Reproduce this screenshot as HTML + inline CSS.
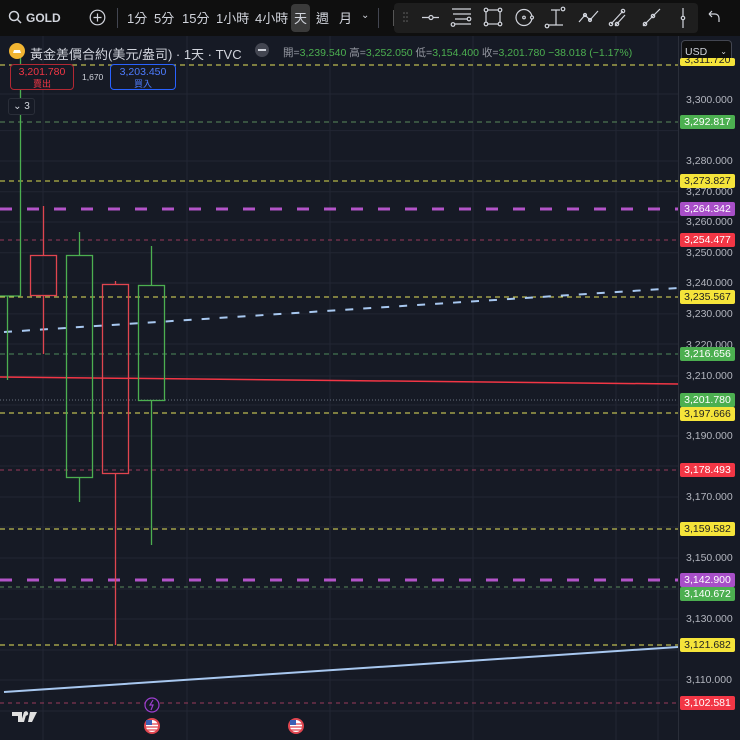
<!DOCTYPE html>
<html><head><meta charset="utf-8"><style>
body{margin:0;width:740px;height:740px;background:#161a25;overflow:hidden;font-family:"Liberation Sans","Noto Sans CJK TC",sans-serif;position:relative}
.tb{position:absolute;left:0;top:0;width:740px;height:36px;background:#0f0f0f}
.t{position:absolute;top:8px;color:#d1d4dc;font-size:13px}
.lg{position:absolute;top:44px;left:30px;color:#d1d4dc;font-size:13px}
.ohlc{position:absolute;top:45px;left:283px;font-size:10.5px;color:#9598a1;white-space:nowrap}
.ohlc b{font-weight:normal;color:#4caf50}
.tag{position:absolute;left:680px;width:55px;height:14px;font-size:10.5px;line-height:14px;text-align:center;border-radius:2px}
.ax{position:absolute;left:686px;font-size:10.5px;color:#b2b5be}
</style></head><body>
<div class="tb">
<svg style="position:absolute;left:8px;top:10px" width="14" height="14"><circle cx="6" cy="6" r="4.5" fill="none" stroke="#d1d4dc" stroke-width="1.5"/><line x1="9.5" y1="9.5" x2="13" y2="13" stroke="#d1d4dc" stroke-width="1.5"/></svg>
<div class="t" style="left:26px;font-weight:bold;font-size:12px;top:11px">GOLD</div>
<svg style="position:absolute;left:89px;top:9px" width="17" height="17"><circle cx="8.5" cy="8.5" r="7.3" fill="none" stroke="#d1d4dc" stroke-width="1.2"/><path d="M8.5 4.5v8M4.5 8.5h8" stroke="#d1d4dc" stroke-width="1.2"/></svg>
<div style="position:absolute;left:117px;top:8px;width:1px;height:20px;background:#434651"></div>
<div class="t" style="left:127px">1分</div><div class="t" style="left:154px">5分</div><div class="t" style="left:182px">15分</div><div class="t" style="left:216px">1小時</div><div class="t" style="left:255px">4小時</div>
<div style="position:absolute;left:291px;top:4px;width:19px;height:28px;background:#3a3a3a;border-radius:4px"></div>
<div class="t" style="left:294px">天</div><div class="t" style="left:316px">週</div><div class="t" style="left:339px">月</div>
<div class="t" style="left:361px;font-size:10px;top:10px">⌄</div>
<div style="position:absolute;left:378px;top:8px;width:1px;height:20px;background:#434651"></div>
<div style="position:absolute;left:394px;top:3px;width:304px;height:30px;background:#1e1e1e;border-radius:4px"></div>
<div style="position:absolute;left:393px;top:10px;width:1px;height:16px;background:#555"></div>
<svg style="position:absolute;left:395px;top:0" width="300" height="36" fill="none" stroke="#d1d4dc" stroke-width="1.2">
<g fill="#666" stroke="none"><circle cx="9" cy="13" r=".8"/><circle cx="12" cy="13" r=".8"/><circle cx="9" cy="17" r=".8"/><circle cx="12" cy="17" r=".8"/><circle cx="9" cy="21" r=".8"/><circle cx="12" cy="21" r=".8"/></g>
<path d="M27 17.5h7M38 17.5h6"/><circle cx="36" cy="17.5" r="2"/>
<path d="M57 9h19M58 14h18M60 19h12M60 24h16"/><circle cx="58" cy="24.5" r="1.8"/><circle cx="74" cy="19" r="1.8"/>
<rect x="91" y="10" width="14" height="14"/><circle cx="91" cy="10" r="1.8" fill="#1e1e1e"/><circle cx="105" cy="10" r="1.8" fill="#1e1e1e"/><circle cx="91" cy="24" r="1.8" fill="#1e1e1e"/><circle cx="105" cy="24" r="1.8" fill="#1e1e1e"/>
<circle cx="129" cy="17.5" r="8"/><circle cx="129" cy="17.5" r="1.3"/><circle cx="137" cy="17.5" r="1.5" fill="#1e1e1e"/>
<path d="M156 10h9M161 10v15M153 25h15"/><circle cx="168" cy="9" r="1.8"/><circle cx="152" cy="26" r="1.8"/>
<path d="M184 22l6-7 5 5 8-9"/><circle cx="190" cy="15" r="1.5"/><circle cx="195" cy="20" r="1.5"/>
<path d="M216 24l12-13M220 26l10-11"/><circle cx="216" cy="24" r="1.7"/><circle cx="222" cy="24" r="1.7"/><circle cx="228" cy="11" r="1.7"/>
<path d="M248 26l17-17"/><circle cx="250" cy="24" r="1.7"/><circle cx="258" cy="16" r="1.7"/>
</svg>
<svg style="position:absolute;left:675px;top:0" width="65" height="36" fill="none" stroke="#d1d4dc" stroke-width="1.2"><path d="M8 8v20"/><circle cx="8" cy="18" r="1.7" fill="#1e1e1e"/><path d="M34 14h6a4 4 0 0 1 4 4v4M34 14l3-3M34 14l3 3"/></svg>
</div>
<svg style="position:absolute;left:0;top:36px" width="740" height="704">
<g stroke="#222633" stroke-width="1">
<line x1="0" y1="94.6" x2="678" y2="94.6"/><line x1="0" y1="125" x2="678" y2="125"/><line x1="0" y1="155.7" x2="678" y2="155.7"/><line x1="0" y1="186" x2="678" y2="186"/><line x1="0" y1="216.8" x2="678" y2="216.8"/><line x1="0" y1="247" x2="678" y2="247"/><line x1="0" y1="277.9" x2="678" y2="277.9"/><line x1="0" y1="308" x2="678" y2="308"/><line x1="0" y1="340" x2="678" y2="340"/><line x1="0" y1="369" x2="678" y2="369"/><line x1="0" y1="400" x2="678" y2="400"/><line x1="0" y1="430" x2="678" y2="430"/><line x1="0" y1="461" x2="678" y2="461"/><line x1="0" y1="491" x2="678" y2="491"/><line x1="0" y1="522" x2="678" y2="522"/><line x1="0" y1="553" x2="678" y2="553"/><line x1="0" y1="583" x2="678" y2="583"/><line x1="0" y1="614" x2="678" y2="614"/><line x1="0" y1="644" x2="678" y2="644"/><line x1="0" y1="675" x2="678" y2="675"/><line x1="0" y1="58" x2="678" y2="58"/>
<line x1="43" y1="0" x2="43" y2="704"/><line x1="187" y1="0" x2="187" y2="704"/><line x1="330" y1="0" x2="330" y2="704"/><line x1="473" y1="0" x2="473" y2="704"/><line x1="616" y1="0" x2="616" y2="704"/><line x1="658" y1="0" x2="658" y2="704"/>
</g>
<line x1="678.5" y1="0" x2="678.5" y2="704" stroke="#2a2e39"/>
<g fill="none" stroke-width="1">
<line x1="0" y1="29" x2="678" y2="29" stroke="#e6e25a" stroke-dasharray="5 4"/>
<line x1="0" y1="86" x2="678" y2="86" stroke="#5a8a5a" stroke-dasharray="5 4"/>
<line x1="0" y1="145" x2="678" y2="145" stroke="#dcdc50" stroke-dasharray="5 4"/>
<line x1="0" y1="173" x2="678" y2="173" stroke="#b354c8" stroke-width="3" stroke-dasharray="12 15"/>
<line x1="0" y1="204" x2="678" y2="204" stroke="#9a3a5a" stroke-dasharray="4 4"/>
<line x1="0" y1="261" x2="678" y2="261" stroke="#e6e25a" stroke-dasharray="5 4"/>
<line x1="0" y1="318" x2="678" y2="318" stroke="#4e8a5a" stroke-dasharray="5 4"/>
<line x1="0" y1="364" x2="678" y2="364" stroke="#6a7280" stroke-dasharray="1 2"/>
<line x1="0" y1="377" x2="678" y2="377" stroke="#e6e25a" stroke-dasharray="5 4"/>
<line x1="0" y1="434" x2="678" y2="434" stroke="#9a3a5a" stroke-dasharray="4 4"/>
<line x1="0" y1="493" x2="678" y2="493" stroke="#e6e25a" stroke-dasharray="5 4"/>
<line x1="0" y1="544" x2="678" y2="544" stroke="#b354c8" stroke-width="3" stroke-dasharray="12 15"/>
<line x1="0" y1="551" x2="678" y2="551" stroke="#5a8a5a" stroke-dasharray="4 4"/>
<line x1="0" y1="609" x2="678" y2="609" stroke="#e6e25a" stroke-dasharray="5 4"/>
<line x1="0" y1="667" x2="678" y2="667" stroke="#9a3a5a" stroke-dasharray="4 4"/>
<line x1="0" y1="341" x2="678" y2="348" stroke="#f23645" stroke-width="1.5"/>
<line x1="4" y1="296" x2="678" y2="252" stroke="#a8c8f0" stroke-width="2" stroke-dasharray="8 10"/>
<line x1="4" y1="656" x2="678" y2="611" stroke="#a8c8f0" stroke-width="2"/>
</g>
<g fill="none" stroke-width="1.3">
<g stroke="#4caf50"><path d="M20.5 20v240M7.5 260v84"/><line x1="0" y1="260" x2="20.5" y2="260"/>
<rect x="66.5" y="219.5" width="26" height="222"/><line x1="79.5" y1="196" x2="79.5" y2="219"/><line x1="79.5" y1="442" x2="79.5" y2="466"/>
<rect x="138.5" y="249.5" width="26" height="115"/><line x1="151.5" y1="210" x2="151.5" y2="249"/><line x1="151.5" y1="365" x2="151.5" y2="509"/></g>
<g stroke="#e0454f"><rect x="30.5" y="219.5" width="26" height="40"/><line x1="43.5" y1="170" x2="43.5" y2="219"/><line x1="43.5" y1="260" x2="43.5" y2="318"/>
<rect x="102.5" y="248.5" width="26" height="189"/><line x1="115.5" y1="245" x2="115.5" y2="248"/><line x1="115.5" y1="438" x2="115.5" y2="609"/></g>
</g>
<circle cx="152" cy="669" r="7" fill="#161a25" stroke="#9c3fd0" stroke-width="1.2"/><path d="M153 664l-3 5h3l-2 5" stroke="#9c3fd0" fill="none" stroke-width="1.2"/>
<circle cx="152" cy="690" r="8" fill="#e0454f"/><circle cx="152" cy="690" r="6" fill="#fff"/><path d="M146 688h12M146 691h12M146 694h12" stroke="#e0454f" stroke-width="1.2"/><rect x="146" y="684" width="6" height="5" fill="#3a5fb5"/>
<circle cx="296" cy="690" r="8" fill="#e0454f"/><circle cx="296" cy="690" r="6" fill="#fff"/><path d="M290 688h12M290 691h12M290 694h12" stroke="#e0454f" stroke-width="1.2"/><rect x="290" y="684" width="6" height="5" fill="#3a5fb5"/>
<path d="M12 676h10v10h-4v-6h-6zM24 676h3l-3 10h-3z" fill="#e0e0e0"/><circle cx="26" cy="677.5" r="2.2" fill="#e0e0e0"/><path d="M30 676h7l-5 10h-4z" fill="#e0e0e0"/>
</svg>
<svg style="position:absolute;left:9px;top:43px" width="16" height="16"><circle cx="8" cy="8" r="8" fill="#f2b532"/><path d="M4 10h8l-1-3H5z" fill="#fff"/></svg>
<div class="lg">黃金差價合約(美元/盎司) · 1天 · TVC</div>
<div style="position:absolute;left:255px;top:43px;width:14px;height:14px;border-radius:7px;background:#434651"><div style="margin:6px 3px;height:2px;background:#d1d4dc"></div></div>
<div class="ohlc">開=<b>3,239.540</b> 高=<b>3,252.050</b> 低=<b>3,154.400</b> 收=<b>3,201.780</b> <b>−38.018 (−1.17%)</b></div>
<div style="position:absolute;left:10px;top:64px;width:64px;height:26px;border:1px solid #b22833;border-radius:4px;background:#161a25;text-align:center;color:#f23645;font-size:10.5px;line-height:12px;padding-top:1px;box-sizing:border-box">3,201.780<br><span style="font-size:9px">賣出</span></div>
<div style="position:absolute;left:82px;top:72px;color:#d1d4dc;font-size:8.5px">1,670</div>
<div style="position:absolute;left:110px;top:64px;width:66px;height:26px;border:1px solid #2962ff;border-radius:4px;background:#161a25;text-align:center;color:#4d7cff;font-size:10.5px;line-height:12px;padding-top:1px;box-sizing:border-box">3,203.450<br><span style="font-size:9px">買入</span></div>
<div style="position:absolute;left:8px;top:98px;width:25px;height:15px;border:1px solid #2a2e39;border-radius:3px;color:#d1d4dc;font-size:10px;line-height:15px;text-align:center;background:#161a25">⌄ 3</div>
<div style="position:absolute;left:681px;top:40px;width:51px;height:22px;border:1px solid #434651;border-radius:4px;background:#0f0f0f;color:#d1d4dc;font-size:10.5px;line-height:22px;padding-left:3px;box-sizing:border-box">USD <span style="float:right;margin-right:4px;font-size:8px">⌄</span></div>
<div class="ax" style="top:94px">3,300.000</div><div class="ax" style="top:155px">3,280.000</div><div class="ax" style="top:186px">3,270.000</div><div class="ax" style="top:216px">3,260.000</div><div class="ax" style="top:247px">3,250.000</div><div class="ax" style="top:277px">3,240.000</div><div class="ax" style="top:308px">3,230.000</div><div class="ax" style="top:339px">3,220.000</div><div class="ax" style="top:370px">3,210.000</div><div class="ax" style="top:430px">3,190.000</div><div class="ax" style="top:491px">3,170.000</div><div class="ax" style="top:521px">3,160.000</div><div class="ax" style="top:552px">3,150.000</div><div class="ax" style="top:613px">3,130.000</div><div class="ax" style="top:674px">3,110.000</div>
<div class="tag" style="top:58px;background:#f5e43a;color:#222;height:8px;line-height:4px;overflow:hidden">3,311.720</div>
<div class="tag" style="top:115px;background:#4caf50;color:#fff">3,292.817</div>
<div class="tag" style="top:174px;background:#f5e43a;color:#222">3,273.827</div>
<div class="tag" style="top:202px;background:#a84fc8;color:#fff">3,264.342</div>
<div class="tag" style="top:233px;background:#f23645;color:#fff">3,254.477</div>
<div class="tag" style="top:290px;background:#f5e43a;color:#222">3,235.567</div>
<div class="tag" style="top:347px;background:#4caf50;color:#fff">3,216.656</div>
<div class="tag" style="top:393px;background:#4caf50;color:#fff">3,201.780</div>
<div class="tag" style="top:407px;background:#f5e43a;color:#222">3,197.666</div>
<div class="tag" style="top:463px;background:#f23645;color:#fff">3,178.493</div>
<div class="tag" style="top:522px;background:#f5e43a;color:#222">3,159.582</div>
<div class="tag" style="top:573px;background:#a84fc8;color:#fff">3,142.900</div>
<div class="tag" style="top:587px;background:#4caf50;color:#fff">3,140.672</div>
<div class="tag" style="top:638px;background:#f5e43a;color:#222">3,121.682</div>
<div class="tag" style="top:696px;background:#f23645;color:#fff">3,102.581</div>
</body></html>
